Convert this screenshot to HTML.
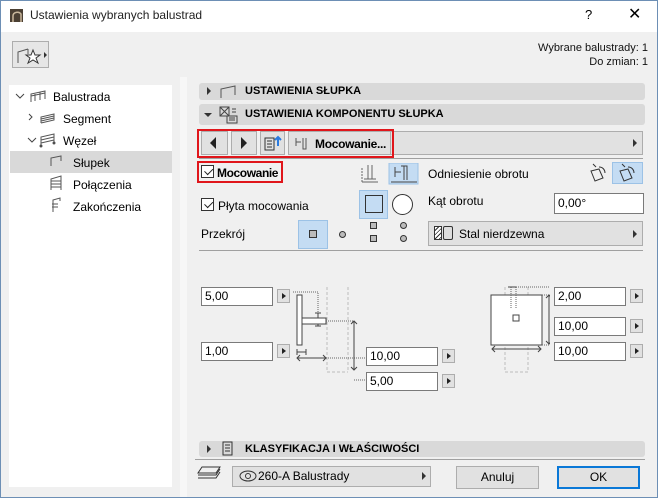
<!DOCTYPE html>
<html><head><meta charset="utf-8"><style>
*{box-sizing:border-box;margin:0;padding:0}
body{width:658px;height:498px;overflow:hidden;background:#f0f0f0;font-family:"Liberation Sans",sans-serif;font-size:12px;color:#000;position:relative}
.a{position:absolute}
.win{left:0;top:0;width:658px;height:498px;border:1px solid #6d8fb5}
.title{left:1px;top:1px;width:656px;height:31px;background:#fff}
.tree{left:9px;top:85px;width:163px;height:402px;background:#fff}
.strip{left:180px;top:77px;width:7px;height:420px;background:#f7f7f7}
.bar{background:#d9d9d9;border-radius:3px;font-weight:bold;font-size:11px;color:#111}
.btn{background:#e1e1e1;border:1px solid #adadad}
.inp{background:#fff;border:1px solid #7a7a7a;padding-left:3px;line-height:16px}
.ar{width:13px;height:14px;background:#e1e1e1;border:1px solid #adadad}
.ar:after{content:"";position:absolute;left:4px;top:3px;border-left:4px solid #222;border-top:3px solid transparent;border-bottom:3px solid transparent}
.tri{border-left:4px solid #333;border-top:4px solid transparent;border-bottom:4px solid transparent;width:0;height:0}
.trid{border-top:4px solid #333;border-left:4px solid transparent;border-right:4px solid transparent;width:0;height:0}
.cb{width:13px;height:13px;border:1px solid #333;background:#fff}
.cb:after{content:"";position:absolute;left:2px;top:0px;width:7px;height:4px;border-left:1.5px solid #222;border-bottom:1.5px solid #222;transform:rotate(-45deg) translate(-1px,2px)}
.sel{background:#c4dcf3;border:1px solid #9cc2e6}
.red{border:2px solid #e0161b}
</style></head><body>
<div class="a win"></div>
<div class="a title"></div>
<svg class="a" style="left:10px;top:9px" width="13" height="13"><rect width="13" height="13" fill="#4a3f33"/><path d="M3 13V7c0-4 6-5 8-2v8" stroke="#c9b79c" stroke-width="1.5" fill="none"/></svg>
<div class="a" style="left:30px;top:8px;font-size:12px;color:#222">Ustawienia wybranych balustrad</div>
<div class="a" style="left:585px;top:7px;font-size:13px">?</div>
<div class="a" style="left:628px;top:4px;font-size:16px">✕</div>

<div class="a btn" style="left:12px;top:41px;width:37px;height:27px;background:#e6e6e6"></div>
<svg class="a" style="left:14px;top:43px" width="34" height="24"><path d="M4 20V9L14 6M14 6V11" stroke="#555" fill="none"/><path d="M19 7l2 5h5l-4 3 2 5-5-3-5 3 2-5-4-3h5z" fill="#fff" stroke="#333"/><path d="M30 9l3 3-3 3z" fill="#333"/></svg>
<div class="a" style="right:10px;top:41px;text-align:right;font-size:11px;line-height:14px;color:#111">Wybrane balustrady: 1<br>Do zmian: 1</div>

<div class="a tree"></div>
<div class="a strip"></div>
<div class="a" style="left:10px;top:151px;width:162px;height:22px;background:#d9d9d9"></div>
<svg class="a" style="left:10px;top:85px" width="165" height="130"><g stroke="#555" fill="none">
<path d="M6 9l4 4 4-4M19 29l3 3-3 3M18 53l4 4 4-4" stroke="#444"/>
<path d="M21 17V9l14-3v8M21 11l14-3M25 16V9M30 15V7" />
<path d="M31 38V32l13-3v6l-13 3M31 34l13-3M31 36l13-3M31 32v6"/>
<path d="M31 60V52l13-3v8M31 55l13-3M31 58l13-3"/><circle cx="31" cy="61" r="1" fill="#333"/><circle cx="44" cy="58" r="1" fill="#333"/>
<path d="M41 81V73l10-2v5"/>
<path d="M41 105V94l10-3v14M41 96h10M41 99h10M41 102h10"/>
<path d="M43 127V115l7-2v3M42 119h6M42 122h6"/>
</g></svg>
<div class="a" style="left:53px;top:90px">Balustrada</div>
<div class="a" style="left:63px;top:112px">Segment</div>
<div class="a" style="left:63px;top:134px">Węzeł</div>
<div class="a" style="left:73px;top:156px">Słupek</div>
<div class="a" style="left:73px;top:178px">Połączenia</div>
<div class="a" style="left:73px;top:200px">Zakończenia</div>

<div class="a bar" style="left:199px;top:83px;width:446px;height:17px"></div>
<div class="a tri" style="left:207px;top:87px"></div>
<svg class="a" style="left:219px;top:84px" width="20" height="15"><path d="M2 14V5l14-3v9" stroke="#555" fill="none"/></svg>
<div class="a" style="left:245px;top:85px;font-weight:bold;font-size:11px">USTAWIENIA SŁUPKA</div>
<div class="a bar" style="left:199px;top:104px;width:446px;height:21px"></div>
<div class="a trid" style="left:204px;top:113px"></div>
<svg class="a" style="left:219px;top:106px" width="20" height="18"><g stroke="#444" fill="none"><rect x="1" y="1" width="9" height="9"/><path d="M1 1l9 9M10 1l-9 9"/><rect x="8" y="10" width="10" height="7"/><path d="M10 12h6M10 14h6M13 3h4M13 6h4"/></g></svg>
<div class="a" style="left:245px;top:108px;font-weight:bold;font-size:11px">USTAWIENIA KOMPONENTU SŁUPKA</div>

<div class="a btn" style="left:288px;top:131px;width:355px;height:24px"></div>
<div class="a tri" style="left:633px;top:139px"></div>
<div class="a red" style="left:197px;top:129px;width:197px;height:29px"></div>
<div class="a btn" style="left:201px;top:131px;width:27px;height:24px"></div>
<div class="a" style="left:210px;top:137px;border-right:6px solid #222;border-top:6px solid transparent;border-bottom:6px solid transparent"></div>
<div class="a btn" style="left:231px;top:131px;width:26px;height:24px"></div>
<div class="a" style="left:241px;top:137px;border-left:6px solid #222;border-top:6px solid transparent;border-bottom:6px solid transparent"></div>
<div class="a btn" style="left:260px;top:131px;width:25px;height:24px"></div>
<svg class="a" style="left:263px;top:134px" width="20" height="18"><g stroke="#333" fill="none"><path d="M2 4h9v12H2z"/><path d="M4 7h5M4 10h5M4 13h5"/></g><path d="M15 12V4M12 6l3-3 3 3" stroke="#2a7be0" stroke-width="2" fill="none"/></svg>
<div class="a btn" style="left:288px;top:131px;width:103px;height:24px"></div>
<svg class="a" style="left:294px;top:135px" width="16" height="16"><path d="M2 3v8M2 7h5M9 3v11h3V3" stroke="#555" fill="none"/></svg>
<div class="a" style="left:315px;top:137px;font-weight:bold;letter-spacing:-0.3px">Mocowanie...</div>
<div class="a" style="left:199px;top:158px;width:444px;height:1px;background:#a0a0a0"></div>

<div class="a red" style="left:197px;top:161px;width:86px;height:22px"></div>
<div class="a cb" style="left:201px;top:165px"></div>
<div class="a" style="left:217px;top:166px;font-weight:bold;letter-spacing:-0.4px">Mocowanie</div>
<svg class="a" style="left:360px;top:163px" width="60" height="22"><g stroke="#666" fill="none"><path d="M8 2v14M12 2v14M4 16h12M2 19h16" /><path d="M2 19v-14" stroke-dasharray="2 1"/></g><rect x="29" y="0" width="29" height="21" fill="#c4dcf3" stroke="#9cc2e6"/><g stroke="#444" fill="none"><path d="M35 4v10M35 9h6M44 3v14M41 3h6v14M31 19h26"/></g></svg>
<div class="a" style="left:428px;top:167px">Odniesienie obrotu</div>
<div class="a sel" style="left:612px;top:162px;width:31px;height:22px"></div>
<svg class="a" style="left:585px;top:161px" width="60" height="24"><g stroke="#333" fill="none"><path d="M6 10l8-2 4 9-8 3z M8 3l3 3 M14 6c4 0 6 3 6 6"/><path d="M35 10l8-2 4 9-8 3z M37 3l3 3 M43 6c4 0 6 3 6 6"/></g></svg>

<div class="a cb" style="left:201px;top:198px"></div>
<div class="a" style="left:218px;top:199px">Płyta mocowania</div>
<div class="a sel" style="left:359px;top:190px;width:29px;height:29px"></div>
<div class="a" style="left:365px;top:195px;width:18px;height:18px;border:1px solid #333"></div>
<div class="a" style="left:392px;top:194px;width:21px;height:21px;border:1px solid #333;border-radius:50%;background:#fff"></div>
<div class="a" style="left:428px;top:194px">Kąt obrotu</div>
<div class="a inp" style="left:554px;top:193px;width:90px;height:21px;line-height:19px">0,00°</div>

<div class="a" style="left:201px;top:227px">Przekrój</div>
<div class="a sel" style="left:298px;top:220px;width:30px;height:29px"></div>
<div class="a" style="left:309px;top:230px;width:8px;height:8px;border:1px solid #333;background:#bbb"></div>
<div class="a" style="left:339px;top:231px;width:7px;height:7px;border:1px solid #333;border-radius:50%;background:#bbb"></div>
<div class="a" style="left:370px;top:222px;width:7px;height:7px;border:1px solid #333;background:#bbb"></div>
<div class="a" style="left:370px;top:235px;width:7px;height:7px;border:1px solid #333;background:#bbb"></div>
<div class="a" style="left:400px;top:222px;width:7px;height:7px;border:1px solid #333;border-radius:50%;background:#bbb"></div>
<div class="a" style="left:400px;top:235px;width:7px;height:7px;border:1px solid #333;border-radius:50%;background:#bbb"></div>
<div class="a btn" style="left:428px;top:221px;width:215px;height:25px"></div>
<div class="a" style="left:434px;top:226px;width:8px;height:14px;border:1px solid #333;background:repeating-linear-gradient(135deg,#fff 0 2px,#333 2px 3px)"></div>
<div class="a" style="left:443px;top:226px;width:10px;height:14px;border:1px solid #333;background:#ddd;border-radius:2px"></div>
<div class="a" style="left:459px;top:227px">Stal nierdzewna</div>
<div class="a tri" style="left:633px;top:230px"></div>
<div class="a" style="left:199px;top:250px;width:444px;height:1px;background:#a0a0a0"></div>

<svg class="a" style="left:290px;top:285px" width="260" height="110"><g fill="none" stroke="#444">
<path d="M37 2v85M58 2v85M37 87h21" stroke="#bbb" stroke-dasharray="3 2"/>
<path d="M3 7h25v21M36 36h28M36 73h40M64 95h12" stroke="#666" stroke-dasharray="1 1"/>
<path d="M28 28v13M25 28h6M25 41h6"/>
<path d="M64 36v49"/><path d="M61 39l3-3 3 3M61 82l3 3 3-3" />
<path d="M7 73h29M10 70l-3 3 3 3M33 70l3 3-3 3"/>
<path d="M7 67h9M7 64v6M16 64v6"/>
<rect x="7" y="10" width="5" height="50" fill="#fff"/><rect x="12" y="33" width="24" height="6" fill="#fff"/>
<path d="M215 2v85M238 2v85M215 87h23" stroke="#bbb" stroke-dasharray="3 2"/>
<rect x="201" y="10" width="51" height="50" fill="#fff"/><rect x="223" y="30" width="6" height="6" fill="#fff"/>
<path d="M221 2v22M226 2v22M226 2h38M252 10h12M252 60h12" stroke="#666" stroke-dasharray="1 1"/>
<path d="M218 2h8"/>
<path d="M202 64h49M205 61l-3 3 3 3M248 61l3 3-3 3"/>
<path d="M259 10v49M256 13l3-3 3 3M256 56l3 3 3-3"/>
</g></svg>
<div class="a inp" style="left:201px;top:287px;width:72px;height:19px">5,00</div><div class="a ar" style="left:277px;top:289px"></div>
<div class="a inp" style="left:201px;top:342px;width:72px;height:19px">1,00</div><div class="a ar" style="left:277px;top:344px"></div>
<div class="a inp" style="left:366px;top:347px;width:72px;height:19px">10,00</div><div class="a ar" style="left:442px;top:349px"></div>
<div class="a inp" style="left:366px;top:372px;width:72px;height:19px">5,00</div><div class="a ar" style="left:442px;top:374px"></div>
<div class="a inp" style="left:554px;top:287px;width:72px;height:19px">2,00</div><div class="a ar" style="left:630px;top:289px"></div>
<div class="a inp" style="left:554px;top:317px;width:72px;height:19px">10,00</div><div class="a ar" style="left:630px;top:319px"></div>
<div class="a inp" style="left:554px;top:342px;width:72px;height:19px">10,00</div><div class="a ar" style="left:630px;top:344px"></div>

<div class="a bar" style="left:199px;top:441px;width:446px;height:16px"></div>
<div class="a tri" style="left:207px;top:445px"></div>
<svg class="a" style="left:222px;top:441px" width="12" height="16"><path d="M1 1h9v13H1zM3 4h5M3 7h5M3 10h5" stroke="#333" fill="none"/></svg>
<div class="a" style="left:245px;top:443px;font-weight:bold;font-size:11px">KLASYFIKACJA I WŁAŚCIWOŚCI</div>
<div class="a" style="left:195px;top:459px;width:450px;height:1px;background:#a0a0a0"></div>

<svg class="a" style="left:196px;top:465px" width="28" height="18"><g stroke="#333" fill="none"><path d="M6 2h18l-4 6H2zM2 10h18l4-6M2 13h18l4-6"/></g></svg>
<div class="a btn" style="left:232px;top:466px;width:199px;height:21px"></div>
<svg class="a" style="left:238px;top:469px" width="20" height="14"><ellipse cx="10" cy="7" rx="8" ry="5" stroke="#333" fill="none"/><circle cx="10" cy="7" r="2.5" stroke="#333" fill="none"/></svg>
<div class="a" style="left:258px;top:469px">260-A Balustrady</div>
<div class="a tri" style="left:422px;top:472px"></div>
<div class="a btn" style="left:456px;top:466px;width:83px;height:23px;text-align:center;line-height:21px">Anuluj</div>
<div class="a btn" style="left:557px;top:466px;width:83px;height:23px;text-align:center;line-height:19px;border:2px solid #0a78d7">OK</div>
</body></html>
